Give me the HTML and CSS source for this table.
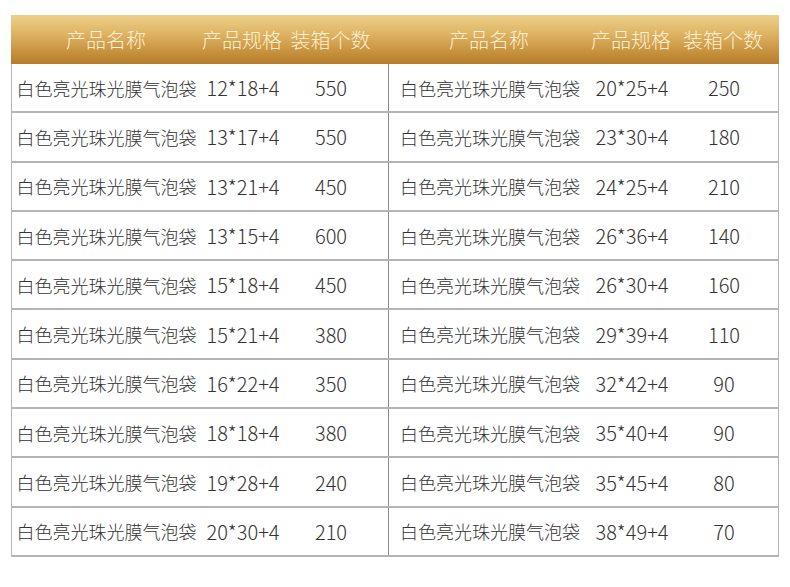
FILE: index.html
```html
<!DOCTYPE html>
<html lang="zh">
<head>
<meta charset="utf-8">
<link rel="stylesheet" href="styles.css">
</head>
<body>
<div class="sheet">
  <div class="head">
    <div>产品名称</div><div>产品规格</div><div class="cnt">装箱个数</div>
    <div>产品名称</div><div>产品规格</div><div class="cnt2">装箱个数</div>
  </div>
  <div class="body">
    <div class="row"><div>白色亮光珠光膜气泡袋</div><div class="num">12*18+4</div><div class="num cnt mid">550</div><div>白色亮光珠光膜气泡袋</div><div class="num">20*25+4</div><div class="num cnt2">250</div></div>
    <div class="row"><div>白色亮光珠光膜气泡袋</div><div class="num">13*17+4</div><div class="num cnt mid">550</div><div>白色亮光珠光膜气泡袋</div><div class="num">23*30+4</div><div class="num cnt2">180</div></div>
    <div class="row"><div>白色亮光珠光膜气泡袋</div><div class="num">13*21+4</div><div class="num cnt mid">450</div><div>白色亮光珠光膜气泡袋</div><div class="num">24*25+4</div><div class="num cnt2">210</div></div>
    <div class="row"><div>白色亮光珠光膜气泡袋</div><div class="num">13*15+4</div><div class="num cnt mid">600</div><div>白色亮光珠光膜气泡袋</div><div class="num">26*36+4</div><div class="num cnt2">140</div></div>
    <div class="row"><div>白色亮光珠光膜气泡袋</div><div class="num">15*18+4</div><div class="num cnt mid">450</div><div>白色亮光珠光膜气泡袋</div><div class="num">26*30+4</div><div class="num cnt2">160</div></div>
    <div class="row"><div>白色亮光珠光膜气泡袋</div><div class="num">15*21+4</div><div class="num cnt mid">380</div><div>白色亮光珠光膜气泡袋</div><div class="num">29*39+4</div><div class="num cnt2">110</div></div>
    <div class="row"><div>白色亮光珠光膜气泡袋</div><div class="num">16*22+4</div><div class="num cnt mid">350</div><div>白色亮光珠光膜气泡袋</div><div class="num">32*42+4</div><div class="num cnt2">90</div></div>
    <div class="row"><div>白色亮光珠光膜气泡袋</div><div class="num">18*18+4</div><div class="num cnt mid">380</div><div>白色亮光珠光膜气泡袋</div><div class="num">35*40+4</div><div class="num cnt2">90</div></div>
    <div class="row"><div>白色亮光珠光膜气泡袋</div><div class="num">19*28+4</div><div class="num cnt mid">240</div><div>白色亮光珠光膜气泡袋</div><div class="num">35*45+4</div><div class="num cnt2">80</div></div>
    <div class="row"><div>白色亮光珠光膜气泡袋</div><div class="num">20*30+4</div><div class="num cnt mid">210</div><div>白色亮光珠光膜气泡袋</div><div class="num">38*49+4</div><div class="num cnt2">70</div></div>
  </div>
</div>
</body>
</html>
```

FILE: styles.css
```css
html, body {
  margin: 0;
  padding: 0;
  background: #ffffff;
}
body {
  font-family: "Noto Sans CJK SC", "Noto Sans", sans-serif;
  font-weight: 300;
}
.sheet {
  width: 768px;
  margin: 15px 0 0 11px;
}
.head, .row {
  display: grid;
  grid-template-columns: 190px 82px 105px 202px 82px 107px;
  align-items: center;
  text-align: center;
}
.head {
  height: 49px;
  background: linear-gradient(180deg, #ecd189 0%, #ddb262 40%, #c48d39 80%, #b67d2e 100%);
  color: #fcefd2;
  font-size: 20px;
}
.body {
  border-left: 1px solid #b4b4b4;
  border-right: 1px solid #b4b4b4;
}
.row {
  box-sizing: border-box;
  height: 49.3px;
  border-bottom: 2px solid #b3b3b3;
  color: #333333;
  font-size: 18px;
}
.row > div {
  height: 100%;
  display: flex;
  align-items: center;
  justify-content: center;
}
.row .num {
  font-size: 20px;
}
.cnt {
  padding-right: 10px;
}
.cnt2 {
  padding-right: 5px;
}
.row .mid {
  box-sizing: border-box;
  border-right: 1px solid #8c8c8c;
}
.row > div:first-child {
  margin-left: -1px;
}
```
